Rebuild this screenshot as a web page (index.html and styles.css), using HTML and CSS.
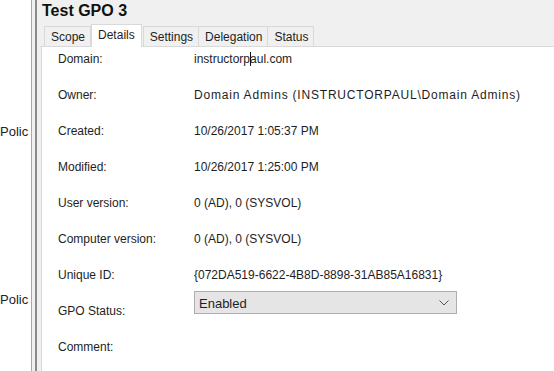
FILE: index.html
```html
<!DOCTYPE html>
<html lang="en">
    <head>
        <meta charset="UTF-8">
        <meta name="viewport" content="width=device-width, initial-scale=1.0">
        <title>Test GPO 3</title>

        <link rel="stylesheet" href="styles.css">
    </head>
    <body>
        <div class="tree-pane">
            <div class="tree-item first">Polic</div>
            <div class="tree-item second">Polic</div>
        </div>
        <div class="splitter"></div>
        <div class="main-pane">
            <div class="gpo-title">Test GPO 3</div>
            <div class="tabs">
                <div class="tab">Scope</div>
                <div class="tab active">Details</div>
                <div class="tab">Settings</div>
                <div class="tab">Delegation</div>
                <div class="tab">Status</div>
            </div>
            <div class="panel">
                <div class="row"><span class="label">Domain:</span><span class="value">instructorp<span class="caret"></span>aul.com</span></div>
                <div class="row"><span class="label">Owner:</span><span class="value wide">Domain Admins (INSTRUCTORPAUL\Domain Admins)</span></div>
                <div class="row"><span class="label">Created:</span><span class="value">10/26/2017 1:05:37 PM</span></div>
                <div class="row"><span class="label">Modified:</span><span class="value">10/26/2017 1:25:00 PM</span></div>
                <div class="row"><span class="label">User version:</span><span class="value">0 (AD), 0 (SYSVOL)</span></div>
                <div class="row"><span class="label">Computer version:</span><span class="value">0 (AD), 0 (SYSVOL)</span></div>
                <div class="row"><span class="label">Unique ID:</span><span class="value">{072DA519-6622-4B8D-8898-31AB85A16831}</span></div>
                <div class="row"><span class="label">GPO Status:</span>
                    <div class="dropdown">
                        <span>Enabled</span>
                        <svg width="10" height="6" viewBox="0 0 10 6"><path d="M0.5 0.5 L5 5 L9.5 0.5" fill="none" stroke="#555" stroke-width="1"/></svg>
                    </div>
                </div>
                <div class="row"><span class="label">Comment:</span></div>
            </div>
        </div>
    </body>
</html>
```

FILE: styles.css
```css
body {
    margin: 0;
    padding: 0;
    width: 554px;
    height: 371px;
    overflow: hidden;
    display: flex;
    font-family: "Liberation Sans", Arial, sans-serif;
    font-size: 12px;
    color: #1e1e1e;
    background-color: white;
}

.tree-pane {
    width: 31px;
    background-color: white;
    position: relative;
    overflow: hidden;
}

.tree-item {
    position: absolute;
    left: 0;
    font-size: 13px;
    color: #222;
}

.tree-item.first {
    top: 124px;
}

.tree-item.second {
    top: 292px;
}

.splitter {
    width: 9px;
    border-left: 1px solid #a8a8a8;
    background: linear-gradient(to right, #f0f0f0 0, #f0f0f0 3px, #8a8a8a 3px, #8a8a8a 5px, #f0f0f0 5px);
    box-sizing: border-box;
}

.main-pane {
    flex: 1;
    background-color: #f0f0f0;
    display: flex;
    flex-direction: column;
    min-height: 0;
}

.gpo-title {
    flex-shrink: 0;
    font-weight: bold;
    font-size: 16px;
    color: #111;
    padding: 2px 0 0 2px;
    height: 20px;
}

.tabs {
    flex-shrink: 0;
    display: flex;
    align-items: flex-end;
    padding-left: 4px;
    height: 24px;
    border-bottom: 1px solid #d9d9d9;
}

.tab {
    height: 19px;
    line-height: 20px;
    padding: 0 5px 0 6px;
    border: 1px solid #d9d9d9;
    border-bottom: none;
    margin-right: -1px;
    color: #1e1e1e;
    background-color: #f0f0f0;
}

.tab.active {
    height: 22px;
    line-height: 21px;
    padding: 0 6px;
    background-color: white;
    margin-bottom: -1px;
    margin-left: 1px;
    margin-right: 1px;
    position: relative;
    z-index: 1;
}

.panel {
    flex: 1;
    min-height: 0;
    overflow: hidden;
    background-color: white;
    margin-left: 1px;
    border-left: 1px solid #d9d9d9;
    padding: 4px 0 0 16px;
}

.row {
    display: flex;
    flex-shrink: 0;
    height: 36px;
    line-height: 16px;
}

.label {
    width: 136px;
    flex-shrink: 0;
}

.value.wide {
    letter-spacing: 0.8px;
}

.caret {
    display: inline-block;
    width: 1px;
    height: 14px;
    background-color: #111;
    vertical-align: -3px;
    margin-right: -1px;
}

.dropdown {
    width: 263px;
    height: 23px;
    margin-top: -12px;
    border: 1px solid #adadad;
    background-color: #e5e5e5;
    display: flex;
    align-items: center;
    justify-content: space-between;
    padding: 0 7px 0 4px;
    box-sizing: border-box;
    font-size: 13px;
}

.dropdown span {
    margin-top: 2px;
}
```
